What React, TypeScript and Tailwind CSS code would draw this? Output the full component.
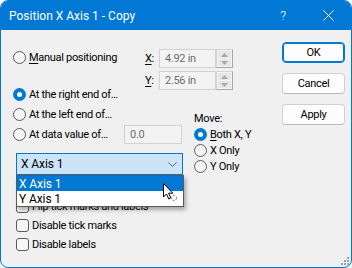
import React from "react";

const Radio = ({ checked }: { checked?: boolean }) =>
  checked ? (
    <span className="w-[13px] h-[13px] rounded-full bg-[#0078d4] flex items-center justify-center shrink-0">
      <span className="w-[5px] h-[5px] rounded-full bg-white" />
    </span>
  ) : (
    <span className="w-[13px] h-[13px] rounded-full border border-[#5a5a5a] bg-[#f5f5f5] shrink-0" />
  );

const Check = () => (
  <span className="w-[13px] h-[13px] rounded-[3px] border border-[#5a5a5a] bg-[#f7f7f7] shrink-0" />
);

const Tri = ({ up }: { up?: boolean }) => (
  <svg width="7" height="4" viewBox="0 0 7 4">
    {up ? <polygon points="0,4 7,4 3.5,0" fill="#a8a8a8" /> : <polygon points="0,0 7,0 3.5,4" fill="#a8a8a8" />}
  </svg>
);

const Spin = ({ value }: { value: string }) => (
  <div className="flex w-[74px] h-[19px]">
    <div className="flex-1 border border-[#d2d2d2] bg-[#f3f3f3] text-[#6d6d6d] pl-[5px] flex items-center leading-none">
      {value}
    </div>
    <div className="w-[17px] border border-[#a8a8a8] border-t-[#d2d2d2] border-l-[#d2d2d2] bg-[#f3f3f3] flex flex-col p-[1px] gap-[1px]">
      <div className="flex-1 bg-[#e6e6e6] flex items-center justify-center">
        <Tri up />
      </div>
      <div className="flex-1 bg-[#e6e6e6] flex items-center justify-center">
        <Tri />
      </div>
    </div>
  </div>
);

const Btn = ({ label, primary }: { label: string; primary?: boolean }) => (
  <div
    className={
      primary
        ? "h-[21px] rounded-[4px] border border-[#0078d4] shadow-[inset_0_0_0_1px_#0078d4] bg-[#fdfdfd] flex items-center justify-center"
        : "h-[21px] rounded-[4px] border border-[#d0d0d0] border-b-[#b8b8b8] bg-[#fdfdfd] flex items-center justify-center"
    }
  >
    {label}
  </div>
);

export default function App() {
  return (
    <div className="w-[352px] h-[268px] rounded-[8px] border border-[#0078d4] bg-[#f0f0f0] overflow-hidden flex flex-col relative text-[11px] tracking-[-0.3px] text-black font-['Roboto',sans-serif] leading-none whitespace-nowrap">
      {/* Title bar */}
      <div className="h-[29px] bg-[#0078d4] flex items-center text-white shrink-0">
        <span className="pl-[8px] text-[12px] tracking-normal">Position X Axis 1 - Copy</span>
        <div className="ml-auto flex h-full">
          <div className="w-[46px] flex items-center justify-center text-[13px] font-light">?</div>
          <div className="w-[45px] flex items-center justify-center">
            <svg width="11" height="11" viewBox="0 0 11 11">
              <path d="M0.5 0.5 L10.5 10.5 M10.5 0.5 L0.5 10.5" stroke="white" strokeWidth="1" />
            </svg>
          </div>
        </div>
      </div>

      {/* Body */}
      <div className="flex-1 flex flex-row">
        <div className="flex-1 flex flex-col pl-[12px] pt-[17px]">
          {/* Block 1 */}
          <div className="flex flex-row items-start">
            <div className="w-[132px] flex flex-col">
              <div className="h-[20px] flex items-center gap-[3px]">
                <Radio />
                <span>
                  <span className="underline underline-offset-2">M</span>anual positioning
                </span>
              </div>
              <div className="h-[20px] mt-[17px] flex items-center gap-[3px]">
                <Radio checked />
                <span>At the right end of…</span>
              </div>
            </div>
            <div className="flex flex-col pt-[2px]">
              <div className="h-[19px] flex items-center">
                <span className="w-[14px]">
                  <span className="underline underline-offset-2">X</span>:
                </span>
                <Spin value="4.92 in" />
              </div>
              <div className="h-[19px] mt-[3px] flex items-center">
                <span className="w-[14px]">
                  <span className="underline underline-offset-2">Y</span>:
                </span>
                <Spin value="2.56 in" />
              </div>
            </div>
          </div>

          {/* Block 2 */}
          <div className="flex flex-row items-start">
            <div className="w-[171px] flex flex-col">
              <div className="h-[20px] flex items-center gap-[3px]">
                <Radio />
                <span>At the left end of…</span>
              </div>
              <div className="h-[20px] flex items-center gap-[3px]">
                <Radio />
                <span className="w-[92px]">At data value of…</span>
                <div className="w-[58px] h-[19px] border border-[#d2d2d2] bg-[#f3f3f3] text-[#6d6d6d] pl-[5px] flex items-center">
                  0.0
                </div>
              </div>
              <div className="mt-[9px] ml-[3px] w-[167px] h-[22px] relative border border-[#0078d4] bg-[#cce4f7] flex items-center pl-[4px] text-[12px] tracking-[-0.1px]">
                <span>X Axis 1</span>
                <svg className="ml-auto mr-[5px]" width="9" height="5" viewBox="0 0 9 5">
                  <path d="M0.5 0.5 L4.5 4.5 L8.5 0.5" stroke="#606060" strokeWidth="1" fill="none" />
                </svg>
                <div className="absolute left-[-1px] top-[21px] w-[168px] border border-[#5a5a5a] bg-white shadow-[2px_3px_4px_rgba(0,0,0,0.3)] z-10 flex flex-col">
                  <div className="h-[15px] bg-[#0078d4] text-white pl-[2px] flex items-center">X Axis 1</div>
                  <div className="h-[15px] bg-white pl-[2px] flex items-center">Y Axis 1</div>
                </div>
              </div>
            </div>
            <div className="ml-[10px] mt-[6px] flex flex-col">
              <div className="h-[16px] flex items-center">Move:</div>
              <div className="h-[16px] flex items-center gap-[3px]">
                <Radio checked />
                <span>
                  <span className="underline underline-offset-2">B</span>oth X, Y
                </span>
              </div>
              <div className="h-[16px] flex items-center gap-[3px]">
                <Radio />
                <span>X Only</span>
              </div>
              <div className="h-[16px] flex items-center gap-[3px]">
                <Radio />
                <span>Y Only</span>
              </div>
            </div>
          </div>

          {/* Block 3 */}
          <div className="mt-[22px] pl-[3px] flex flex-col">
            <div className="h-[19px] flex items-center gap-[3px]">
              <Check />
              <span>Flip tick marks and labels</span>
            </div>
            <div className="h-[19px] flex items-center gap-[3px]">
              <Check />
              <span>Disable tick marks</span>
            </div>
            <div className="h-[19px] flex items-center gap-[3px]">
              <Check />
              <span>Disable labels</span>
            </div>
          </div>
        </div>

        {/* Buttons */}
        <div className="w-[63px] mr-[6px] pt-[12px] flex flex-col gap-[10px]">
          <Btn label="OK" primary />
          <Btn label="Cancel" />
          <Btn label="Apply" />
        </div>
      </div>

      {/* Cursor */}
      <svg className="absolute left-[161px] top-[181px] z-20" width="16" height="20" viewBox="0 0 16 20">
        <path d="M1.5 1.5 L1.5 15 L4.5 12 L6.8 17 L8.8 16 L6.6 11.2 L10.8 11.2 Z" fill="white" stroke="black" strokeWidth="1" strokeLinejoin="round" />
        <circle cx="12" cy="16" r="2.5" fill="none" stroke="#777" strokeWidth="1" strokeDasharray="2 1.5" />
      </svg>

      {/* Resize grip */}
      <svg className="absolute right-[1px] bottom-[1px]" width="10" height="10" viewBox="0 0 10 10">
        <rect x="7" y="1" width="2" height="2" fill="#a0a0a0" />
        <rect x="4" y="4" width="2" height="2" fill="#a0a0a0" />
        <rect x="7" y="4" width="2" height="2" fill="#a0a0a0" />
        <rect x="1" y="7" width="2" height="2" fill="#a0a0a0" />
        <rect x="4" y="7" width="2" height="2" fill="#a0a0a0" />
        <rect x="7" y="7" width="2" height="2" fill="#a0a0a0" />
      </svg>
    </div>
  );
}
